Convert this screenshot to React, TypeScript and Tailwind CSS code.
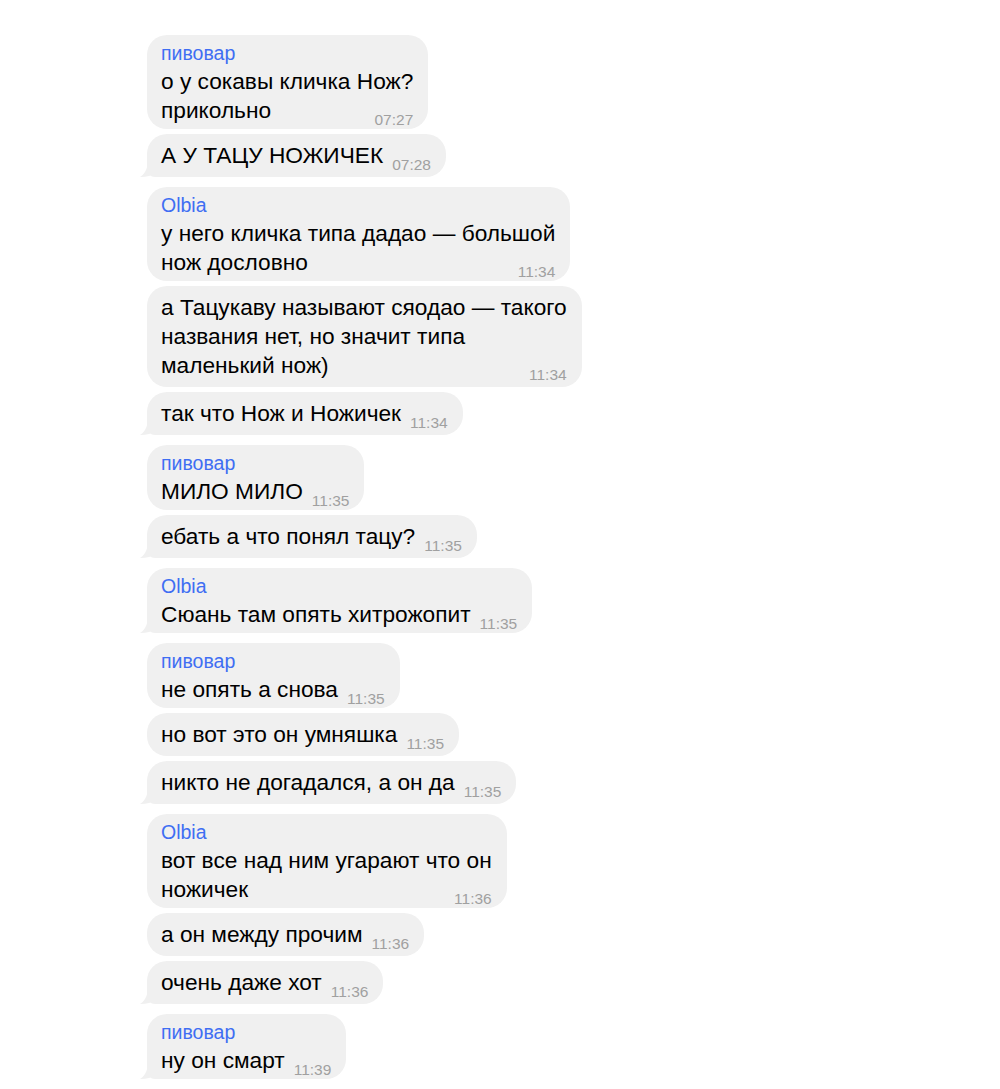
import React from "react";

type Msg = { lines: string[]; time: string };
type Group = { name: string; msgs: Msg[] };

const groups: Group[] = [
  {
    name: "пивовар",
    msgs: [
      { lines: ["о у сокавы кличка Нож?", "прикольно"], time: "07:27" },
      { lines: ["А У ТАЦУ НОЖИЧЕК"], time: "07:28" },
    ],
  },
  {
    name: "Olbia",
    msgs: [
      { lines: ["у него кличка типа дадао — большой", "нож дословно"], time: "11:34" },
      {
        lines: ["а Тацукаву называют сяодао — такого", "названия нет, но значит типа", "маленький нож)"],
        time: "11:34",
      },
      { lines: ["так что Нож и Ножичек"], time: "11:34" },
    ],
  },
  {
    name: "пивовар",
    msgs: [
      { lines: ["МИЛО МИЛО"], time: "11:35" },
      { lines: ["ебать а что понял тацу?"], time: "11:35" },
    ],
  },
  {
    name: "Olbia",
    msgs: [{ lines: ["Сюань там опять хитрожопит"], time: "11:35" }],
  },
  {
    name: "пивовар",
    msgs: [
      { lines: ["не опять а снова"], time: "11:35" },
      { lines: ["но вот это он умняшка"], time: "11:35" },
      { lines: ["никто не догадался, а он да"], time: "11:35" },
    ],
  },
  {
    name: "Olbia",
    msgs: [
      { lines: ["вот все над ним угарают что он", "ножичек"], time: "11:36" },
      { lines: ["а он между прочим"], time: "11:36" },
      { lines: ["очень даже хот"], time: "11:36" },
    ],
  },
  {
    name: "пивовар",
    msgs: [{ lines: ["ну он смарт"], time: "11:39" }],
  },
];

function Tail() {
  return (
    <svg
      className="absolute left-[-7px] bottom-0"
      width="20"
      height="18"
      viewBox="0 0 20 18"
      aria-hidden
    >
      <path d="M8 0 C8 8 6 14 0 18 C7 18 12 16.5 15 14 L20 14 L20 0 Z" fill="#f0f0f0" />
    </svg>
  );
}

function Bubble({ msg, name, tail }: { msg: Msg; name?: string; tail: boolean }) {
  const last = msg.lines[msg.lines.length - 1];
  const before = msg.lines.slice(0, -1);
  return (
    <div
      className={`relative self-start bg-[#f0f0f0] rounded-[20px] pl-[14px] pr-[15px] pt-[7px] ${
        name ? "pb-[4px]" : "pb-[7px]"
      } ${tail ? "rounded-bl-[8px]" : ""}`}
    >
      {tail && <Tail />}
      {name && (
        <div className="text-[19.5px] leading-[20px] text-[#3f6ef3] mb-[4px] mt-[1px]">{name}</div>
      )}
      {before.map((l, i) => (
        <div key={i} className="text-[22.7px] leading-[29px] text-black whitespace-nowrap">
          {l}
        </div>
      ))}
      <div className="flex items-end">
        <span className="text-[22.7px] leading-[29px] text-black whitespace-nowrap">{last}</span>
        <span className="ml-auto pl-[9px] text-[15.5px] leading-[15px] text-[#a0a0a0] mb-[-2px] whitespace-nowrap">
          {msg.time}
        </span>
      </div>
    </div>
  );
}

export default function App() {
  return (
    <div
      className="w-[1000px] h-[1089px] bg-white overflow-hidden"
      style={{ fontFamily: '"Liberation Sans", Arial, sans-serif' }}
    >
      <div className="pl-[147px] pt-[35px] flex flex-col gap-[10px]">
        {groups.map((g, gi) => (
          <div key={gi} className="flex flex-col gap-[5px]">
            {g.msgs.map((m, mi) => (
              <Bubble
                key={mi}
                msg={m}
                name={mi === 0 ? g.name : undefined}
                tail={mi === g.msgs.length - 1}
              />
            ))}
          </div>
        ))}
      </div>
    </div>
  );
}
